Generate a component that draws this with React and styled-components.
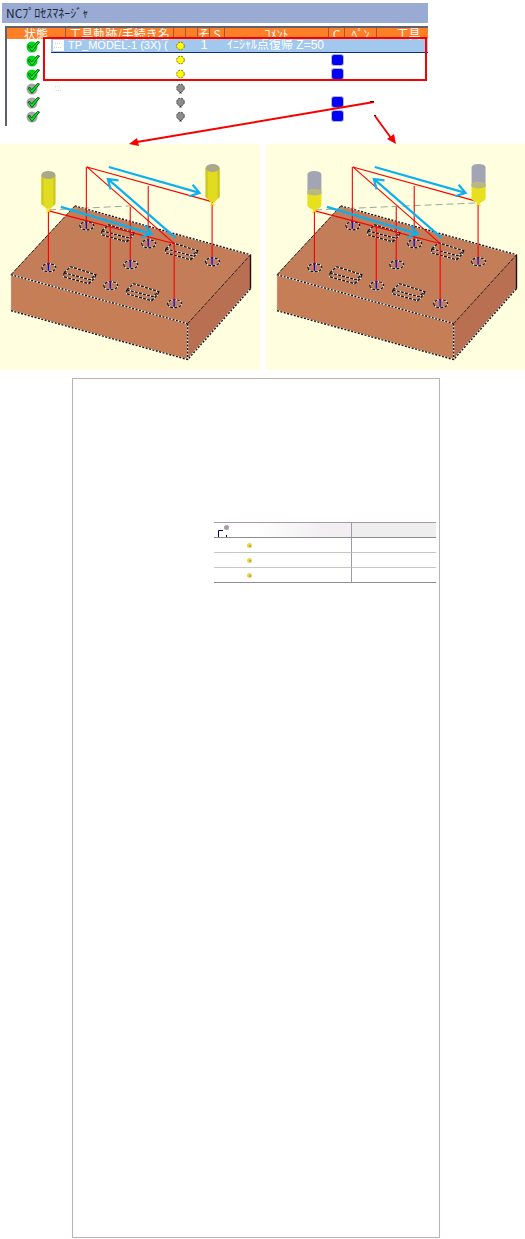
import React from "react";
import styled, { createGlobalStyle } from "styled-components";

const GlobalStyle = createGlobalStyle`
  body {
    margin: 0;
    background: #fff;
    font-family: "Liberation Sans", "Noto Sans CJK JP", sans-serif;
    font-size: 12px;
  }
`;

const Page = styled.main`
  display: flex;
  flex-direction: column;
`;

const Figure = styled.section`
  position: relative;
  padding-top: 3px;
`;

const Manager = styled.div`
  width: 81.1%;
  margin-left: 2px;
`;

const TitleBar = styled.h1`
  margin: 0;
  padding: 0 4px;
  height: 20px;
  line-height: 20px;
  font-size: 12px;
  font-weight: 400;
  font-family: "Noto Sans CJK JP", sans-serif;
  color: #1c2436;
  background: #99abd2;
  white-space: nowrap;
`;

const ListArea = styled.div`
  position: relative;
  margin: 3px 0 0 3px;
  padding-bottom: 3px;
  border-top: 2px solid #60606c;
  border-left: 2px solid #60606c;
`;

const ProcessTable = styled.table`
  width: 100%;
  table-layout: fixed;
  border-collapse: separate;
  border-spacing: 0;
`;

const Col = styled.col`
  width: ${(p) => (p.$w ? `${p.$w}px` : "auto")};
`;

const HeadCell = styled.th`
  box-sizing: border-box;
  padding: 0;
  background: #ff7f27;
  color: #fff;
  font-weight: 400;
  border-right: ${(p) => (p.$last ? "0" : "1px solid #9a5a3a")};
`;

const HeadText = styled.div`
  height: 11px;
  line-height: 11px;
  white-space: nowrap;
  font-family: "Noto Sans CJK JP", sans-serif;
  text-align: center;
`;

const Cell = styled.td`
  box-sizing: border-box;
  height: 14px;
  padding: 0;
  color: #fff;
  background: ${(p) => (p.$selected ? "#a3c8ee" : "transparent")};
  border-bottom: ${(p) => (p.$selected ? "1px solid #0a2f7c" : "0")};
`;

const CellBody = styled.div`
  display: flex;
  align-items: center;
  justify-content: ${(p) => (p.$start ? "flex-start" : "center")};
  height: 13px;
  padding-left: ${(p) => (p.$start ? "2px" : "0")};
  font-size: ${(p) => (p.$small ? "11px" : "12px")};
  line-height: 13px;
  white-space: nowrap;
`;

const StatusBody = styled(CellBody)`
  justify-content: flex-end;
  padding-right: 11px;
`;

const Highlight = styled.div`
  position: absolute;
  top: 9px;
  left: 36px;
  right: 1px;
  height: 40px;
  border: 2px solid #f80000;
`;

const Swatch = styled.span`
  box-sizing: border-box;
  width: 13px;
  height: 12px;
  flex: none;
  border: 1px solid #b8b8c8;
  border-radius: 3px;
  background: #0000ff;
`;

const Scenes = styled.div`
  display: grid;
  grid-template-columns: 1fr 1fr;
  gap: 6px;
  margin-top: 18px;
`;

const SceneSvg = styled.svg`
  display: block;
  width: 100%;
  background: #ffffe0;
`;

const Callouts = styled.svg`
  position: absolute;
  top: 0;
  left: 0;
  width: 100%;
  pointer-events: none;
`;

const Sheet = styled.section`
  box-sizing: border-box;
  width: 70%;
  aspect-ratio: 368 / 862;
  margin: 8px 0 0 72px;
  padding: 143px 3px 0 0;
  border: 1px solid #c0b0b4;
`;

const TreeTable = styled.table`
  width: 61%;
  margin-left: auto;
  table-layout: fixed;
  border-collapse: separate;
  border-spacing: 0;
  border-top: 1px solid #a898a8;
`;

const TreeCell = styled.td`
  box-sizing: border-box;
  height: 15px;
  padding: 0 0 0 ${(p) => p.$indent || 0}px;
  background: ${(p) => p.$fill || "transparent"};
  border-bottom: 1px solid ${(p) => (p.$strong ? "#918b96" : "#c4c9c4")};
  border-right: ${(p) => (p.$divide ? "1px solid #a09aa6" : "0")};
`;

const Glyph = styled.svg`
  display: block;
  flex: none;
`;

function StatusIcon({ done }) {
  return (
    <Glyph width="14" height="13" viewBox="0 0 14 13" role="img" aria-label={done ? "done" : "pending"}>
      <circle cx="6" cy="7" r="5.5" fill={done ? "#00d81c" : "#a4a4a8"} />
      <path d="M2 6 L4 5.5 L5.5 8 L11.5 1.5 L13.5 2 L6 11.5 Z" fill="#00ee20" stroke="#075f10" strokeWidth="1" />
    </Glyph>
  );
}

function Lamp({ on }) {
  return (
    <Glyph width="9" height="12" viewBox="0 0 9 12">
      {!on && <path d="M3 10h3v2H3z" fill="#b9a8a4" />}
      <circle cx="4.5" cy="6" r="3.8" fill={on ? "#ffff00" : "#8c8c8c"} stroke={on ? "#77752a" : "#4c4c4c"} strokeDasharray="2 1" />
      {!on && <path d="M4 10h1v1H4z" fill="#222" />}
    </Glyph>
  );
}

function PageIcon({ faint }) {
  return (
    <Glyph width="11" height="11" viewBox="0 0 11 11">
      {!faint && <rect width="11" height="11" fill="#fff" />}
      <path d="M2 3.5h3m1 0h2M1 7.5h8" stroke={faint ? "#d4dcd4" : "#ccd4cc"} strokeDasharray="1 1" />
    </Glyph>
  );
}

const COLUMNS = [44, 15, 108, 12, 12, 12, 15, 104, 16, 32, null];

const ROWS = [
  { done: true, selected: true, icon: true, name: "TP_MODEL-1 (3X) (", on: true, step: "1", comment: "ｲﾆｼｬﾙ点復帰 Z=50" },
  { done: true, on: true, color: true },
  { done: true, on: true, color: true },
  { icon: true },
  { color: true },
  { color: true },
];

function ProcessRow({ row }) {
  const s = row.selected;
  return (
    <tr>
      <Cell colSpan={1}><StatusBody as={StatusBody}><StatusIcon done={row.done} /></StatusBody></Cell>
      <Cell $selected={s}><CellBody>{row.icon && <PageIcon faint={!s} />}</CellBody></Cell>
      <Cell $selected={s}><CellBody $start $small>{row.name}</CellBody></Cell>
      <Cell $selected={s}><CellBody><Lamp on={row.on} /></CellBody></Cell>
      <Cell $selected={s} />
      <Cell $selected={s}><CellBody>{row.step}</CellBody></Cell>
      <Cell $selected={s} />
      <Cell $selected={s}><CellBody $start>{row.comment}</CellBody></Cell>
      <Cell $selected={s}><CellBody>{row.color && <Swatch />}</CellBody></Cell>
      <Cell $selected={s} />
      <Cell $selected={s} />
    </tr>
  );
}

const HOLES = [
  [87, 82, 23],
  [149, 100, 42],
  [213, 118, 58],
  [131, 121, 63],
  [49, 124, 67],
  [111, 142, 83],
  [175, 160, 100],
];

const PADS = [[102, 87], [166, 105], [64, 129], [127, 146]];

function DashedEdge({ d, width = 1.4, dash = "2 1.5" }) {
  return (
    <g fill="none" strokeWidth={width}>
      <path d={d} stroke="#fff" />
      <path d={d} stroke="#20100c" strokeDasharray={dash} />
    </g>
  );
}

function Tool({ x, y, split }) {
  return (
    <g transform={`translate(${x} ${y})`}>
      {split ? (
        <>
          <path d="M-7 3 Q-6 0 0 0 T7 3 V23 H-7Z" fill="#a4a5b4" />
          <path d="M-7 20 Q0 16 7 20 V35 Q5 38 0 39 Q-5 38 -7 35Z" fill="#e6e01e" />
          <path d="M-7 20 Q0 16 7 20 V23 Q0 26 -7 23Z" fill="#b9b884" />
        </>
      ) : (
        <>
          <path d="M-7 4 V33 L-2 38 H2 L7 33 V4Z" fill="#e2dc20" />
          <path d="M-7 4 V33 L-5 35 V4Z M7 4 V33 L5 35 V4Z" fill="#cbc526" />
          <ellipse cy="4" rx="7" ry="4" fill="#aaa78b" />
        </>
      )}
      <path d="M-2 38 L2 42 M2 38 L-2 42" stroke="#f4e400" strokeWidth="1.2" />
    </g>
  );
}

function BlueArrow({ from, to }) {
  const angle = (Math.atan2(to[1] - from[1], to[0] - from[0]) * 180) / Math.PI;
  const length = Math.hypot(to[0] - from[0], to[1] - from[1]);
  return (
    <g transform={`translate(${to[0]} ${to[1]}) rotate(${angle})`} stroke="#0cb0ee" strokeWidth="2.2" fill="none">
      <path d={`M${-length} 0 H0 M-9 -6 L0 0 L-9 6`} />
    </g>
  );
}

function Scene({ split, label }) {
  return (
    <SceneSvg viewBox="0 0 260 226" role="img" aria-label={label}>
      <path d="M75 62 L251 111 L188 180 L11 131Z" fill="#c47d59" />
      <path d="M11 131 L188 180 V216 L11 167Z" fill="#c57e55" />
      <path d="M188 180 L251 111 V145 L188 216Z" fill="#b96f52" />
      <DashedEdge d="M75 62 L251 111 M11 131 L188 180 M188 180 V216 M11 167 L188 216 L251 145" />
      <path d="M75 62 L11 131 M188 180 L251 111" stroke="#2b1812" strokeDasharray="4 1" fill="none" />
      <path d="M251 111 V145" stroke="#1b1010" strokeWidth="1.4" fill="none" />
      <path d="M11 131 V167" stroke="#ccc" strokeDasharray="1 1" fill="none" />
      {PADS.map(([x, y]) => (
        <g key={x} transform={`translate(${x} ${y})`}>
          <DashedEdge dash="3 1.2" d="M0 0 L7 -6 L32 2 L26 7Z M0 0 V4 L25 11 L26 7 M25 11 L31 5 L32 2" />
        </g>
      ))}
      {HOLES.map(([x, y]) => (
        <DashedEdge key={x} dash="3 1.2" d={`M${x - 7} ${y} a7 4 0 1 0 14 0 a7 4 0 1 0 -14 0`} />
      ))}
      <path d={split ? "M49 66 L213 59" : "M49 66 L131 62"} stroke="#9aa69a" strokeDasharray="7 4" fill="none" />
      <g fill="none" stroke="#f80000" strokeWidth="1.1">
        {HOLES.map(([x, y, top]) => (
          <path key={x} d={`M${x - 0.5} ${top} V${y - 4}`} />
        ))}
        <path d="M49 67 L175 100 L87 23 L213 58" />
      </g>
      {HOLES.map(([x, y]) => (
        <path key={x} d={`M${x - 0.5} ${y - 4} V${y + 3}`} stroke="#0000ff" strokeWidth="1.2" />
      ))}
      <Tool x={48.5} y={27} split={split} />
      <Tool x={213} y={20} split={split} />
      <BlueArrow from={[61, 63]} to={[152, 90]} />
      <BlueArrow from={[176, 94]} to={[108, 35]} />
      <BlueArrow from={[109, 23]} to={[200, 49]} />
    </SceneSvg>
  );
}

export default function App() {
  return (
    <>
      <GlobalStyle />
      <Page>
        <Figure>
          <Manager>
            <TitleBar>NCﾌﾟﾛｾｽﾏﾈｰｼﾞｬ</TitleBar>
            <ListArea>
              <ProcessTable>
                <colgroup>
                  {COLUMNS.map((w, i) => <Col key={i} $w={w} />)}
                </colgroup>
                <thead>
                  <tr>
                    <HeadCell colSpan={2}><HeadText>状態</HeadText></HeadCell>
                    <HeadCell><HeadText>工具軌跡/手続き名</HeadText></HeadCell>
                    <HeadCell />
                    <HeadCell />
                    <HeadCell><HeadText>そ</HeadText></HeadCell>
                    <HeadCell><HeadText>S</HeadText></HeadCell>
                    <HeadCell><HeadText>ｺﾒﾝﾄ</HeadText></HeadCell>
                    <HeadCell><HeadText>C</HeadText></HeadCell>
                    <HeadCell><HeadText>ﾍﾟﾝ</HeadText></HeadCell>
                    <HeadCell $last><HeadText>　工具</HeadText></HeadCell>
                  </tr>
                </thead>
                <tbody>
                  {ROWS.map((row, i) => <ProcessRow key={i} row={row} />)}
                </tbody>
              </ProcessTable>
              <Highlight />
            </ListArea>
          </Manager>
          <Scenes>
            <Scene label="Tool path" />
            <Scene split label="Tool path with holder" />
          </Scenes>
          <Callouts viewBox="0 0 525 372">
            <path d="M374 102 L137 142 M375 116 L391 138" stroke="#f80000" strokeWidth="1.9" />
            <path d="M129 144 L137 138 L139 146Z M396 144 L387 139 L394 134Z" fill="#f80000" />
            <path d="M370 101.5h4 M374 115.5h2" stroke="#300" />
          </Callouts>
        </Figure>
        <Sheet>
          <TreeTable>
            <colgroup>
              <Col $w={138} />
              <Col />
            </colgroup>
            <tbody>
              <tr>
                <TreeCell $strong $divide $indent={4} $fill="linear-gradient(90deg, #fff 30%, #f1eff1 80%)">
                  <Glyph width="14" height="14" viewBox="0 0 14 14">
                    <path d="M0.5 14V7.5H5M8.5 12v2" stroke="#000080" fill="none" />
                    <circle cx="8.5" cy="4.5" r="2.5" fill="#a3a0a6" />
                  </Glyph>
                </TreeCell>
                <TreeCell $strong $fill="#efeeef" />
              </tr>
              {[false, false, true].map((last, i) => (
                <tr key={i}>
                  <TreeCell $divide $strong={last} $indent={33}>
                    <Glyph width="5" height="6" viewBox="0 0 5 6">
                      <circle cx="2.5" cy="3.5" r="2.5" fill="#e6d65a" />
                      <circle cx="3" cy="4" r="1" fill="#c89a3c" />
                    </Glyph>
                  </TreeCell>
                  <TreeCell $strong={last} />
                </tr>
              ))}
            </tbody>
          </TreeTable>
        </Sheet>
      </Page>
    </>
  );
}
